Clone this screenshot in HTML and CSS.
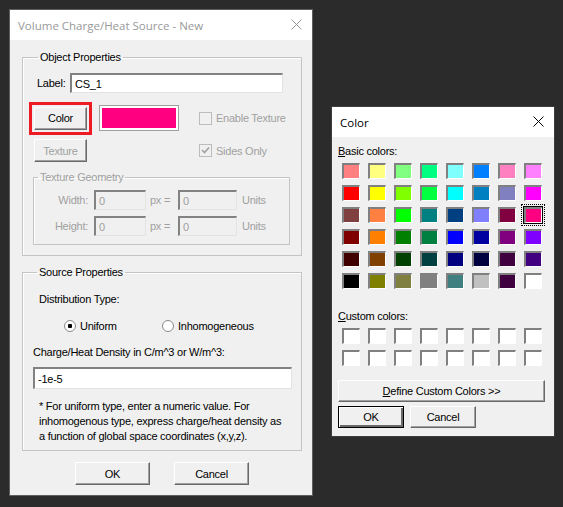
FILE: index.html
```html
<!DOCTYPE html>
<html lang="en">
<head>
<meta charset="UTF-8">
<title>Volume Charge/Heat Source - New</title>
<link rel="stylesheet" href="styles.css">
</head>
<body>
<div class="screen">

    <!-- main dialog -->
    <div class="dialog dialog-source">
        <div class="titlebar inactive">
            <span class="title">Volume Charge/Heat Source - New</span>
            <svg class="close" width="11" height="11" viewBox="0 0 11 11"><path d="M0.5 0.5 L10.5 10.5 M10.5 0.5 L0.5 10.5" stroke="currentColor" stroke-width="1" fill="none"/></svg>
        </div>
        <div class="dialog-body">
            <fieldset class="group group-object">
                <legend>Object Properties</legend>
                <div class="label-row">
                    <span class="label-text">Label:</span>
                    <div class="field field-label">CS_1</div>
                </div>
                <div class="row row-color">
                    <div class="btn btn-color">Color</div>
                    <div class="color-preview"><div class="color-fill"></div></div>
                    <div class="check disabled"><span class="box"></span>Enable Texture</div>
                </div>
                <div class="row row-texture">
                    <div class="btn disabled">Texture</div>
                    <div class="check disabled checked">
                        <span class="box"><svg width="9" height="9" viewBox="0 0 9 9"><path d="M1 4 L3.5 6.5 L8 1.5" stroke="currentColor" stroke-width="1.6" fill="none"/></svg></span>Sides Only
                    </div>
                </div>
                <fieldset class="group group-geom disabled">
                    <legend>Texture Geometry</legend>
                    <div class="geom-row">
                        <span class="geom-label">Width:</span>
                        <div class="field field-px">0</div>
                        <span class="geom-eq">px =</span>
                        <div class="field field-units">0</div>
                        <span class="geom-units">Units</span>
                    </div>
                    <div class="geom-row">
                        <span class="geom-label">Height:</span>
                        <div class="field field-px">0</div>
                        <span class="geom-eq">px =</span>
                        <div class="field field-units">0</div>
                        <span class="geom-units">Units</span>
                    </div>
                </fieldset>
            </fieldset>

            <fieldset class="group group-source">
                <legend>Source Properties</legend>
                <div class="dist-label">Distribution Type:</div>
                <div class="radio-row">
                    <div class="radio selected"><span class="dot"></span>Uniform</div>
                    <div class="radio"><span class="dot"></span>Inhomogeneous</div>
                </div>
                <div class="density-label">Charge/Heat Density in C/m^3 or W/m^3:</div>
                <div class="field field-density">-1e-5</div>
                <p class="note">* For uniform type, enter a numeric value. For<br>inhomogenous type, express charge/heat density as<br>a function of global space coordinates (x,y,z).</p>
            </fieldset>

            <div class="actions">
                <div class="btn btn-wide">OK</div>
                <div class="btn btn-wide">Cancel</div>
            </div>
        </div>
    </div>

    <!-- color picker -->
    <div class="dialog dialog-color">
        <div class="titlebar">
            <span class="title">Color</span>
            <svg class="close" width="11" height="11" viewBox="0 0 11 11"><path d="M0.5 0.5 L10.5 10.5 M10.5 0.5 L0.5 10.5" stroke="currentColor" stroke-width="1" fill="none"/></svg>
        </div>
        <div class="color-body">
            <div class="section-label"><u>B</u>asic colors:</div>
            <div class="swatch-grid">
                <span class="swatch" style="background:#ff8080"></span>
                <span class="swatch" style="background:#ffff80"></span>
                <span class="swatch" style="background:#80ff80"></span>
                <span class="swatch" style="background:#00ff80"></span>
                <span class="swatch" style="background:#80ffff"></span>
                <span class="swatch" style="background:#0080ff"></span>
                <span class="swatch" style="background:#ff80c0"></span>
                <span class="swatch" style="background:#ff80ff"></span>

                <span class="swatch" style="background:#ff0000"></span>
                <span class="swatch" style="background:#ffff00"></span>
                <span class="swatch" style="background:#80ff00"></span>
                <span class="swatch" style="background:#00ff40"></span>
                <span class="swatch" style="background:#00ffff"></span>
                <span class="swatch" style="background:#0080c0"></span>
                <span class="swatch" style="background:#8080c0"></span>
                <span class="swatch" style="background:#ff00ff"></span>

                <span class="swatch" style="background:#804040"></span>
                <span class="swatch" style="background:#ff8040"></span>
                <span class="swatch" style="background:#00ff00"></span>
                <span class="swatch" style="background:#008080"></span>
                <span class="swatch" style="background:#004080"></span>
                <span class="swatch" style="background:#8080ff"></span>
                <span class="swatch" style="background:#800040"></span>
                <span class="swatch selected" style="background:#ff0080"></span>

                <span class="swatch" style="background:#800000"></span>
                <span class="swatch" style="background:#ff8000"></span>
                <span class="swatch" style="background:#008000"></span>
                <span class="swatch" style="background:#008040"></span>
                <span class="swatch" style="background:#0000ff"></span>
                <span class="swatch" style="background:#0000a0"></span>
                <span class="swatch" style="background:#800080"></span>
                <span class="swatch" style="background:#8000ff"></span>

                <span class="swatch" style="background:#400000"></span>
                <span class="swatch" style="background:#804000"></span>
                <span class="swatch" style="background:#004000"></span>
                <span class="swatch" style="background:#004040"></span>
                <span class="swatch" style="background:#000080"></span>
                <span class="swatch" style="background:#000040"></span>
                <span class="swatch" style="background:#400040"></span>
                <span class="swatch" style="background:#400080"></span>

                <span class="swatch" style="background:#000000"></span>
                <span class="swatch" style="background:#808000"></span>
                <span class="swatch" style="background:#808040"></span>
                <span class="swatch" style="background:#808080"></span>
                <span class="swatch" style="background:#408080"></span>
                <span class="swatch" style="background:#c0c0c0"></span>
                <span class="swatch" style="background:#400040"></span>
                <span class="swatch" style="background:#ffffff"></span>
            </div>

            <div class="section-label section-custom"><u>C</u>ustom colors:</div>
            <div class="swatch-grid">
                <span class="swatch"></span><span class="swatch"></span><span class="swatch"></span><span class="swatch"></span>
                <span class="swatch"></span><span class="swatch"></span><span class="swatch"></span><span class="swatch"></span>
                <span class="swatch"></span><span class="swatch"></span><span class="swatch"></span><span class="swatch"></span>
                <span class="swatch"></span><span class="swatch"></span><span class="swatch"></span><span class="swatch"></span>
            </div>

            <div class="btn btn-define"><u>D</u>efine Custom Colors &gt;&gt;</div>
            <div class="color-actions">
                <div class="btn btn-small default">OK</div>
                <div class="btn btn-small">Cancel</div>
            </div>
        </div>
    </div>

</div>
</body>
</html>
```

FILE: styles.css
```css
* {
    box-sizing: border-box;
}

body {
    margin: 0;
    width: 563px;
    height: 507px;
    overflow: hidden;
    background-color: #2b2b2b;
    font-family: "Liberation Sans", Arial, sans-serif;
    font-size: 11px;
    letter-spacing: -0.25px;
    color: #000;
}

.screen {
    display: flex;
    align-items: flex-start;
    padding: 10px 0 0 10px;
}

/* window frame */
.dialog {
    background-color: #f0f0f0;
    box-shadow: 0 0 0 1px #5e5e5e;
}

.dialog-source {
    width: 302px;
    height: 485px;
}

.dialog-color {
    width: 222px;
    height: 329px;
    margin-left: 20px;
    margin-top: 97px;
    box-shadow: 0 0 0 1px #3c3c3c;
}

.titlebar {
    height: 30px;
    display: flex;
    align-items: center;
    justify-content: space-between;
    padding: 0 10px 0 8px;
    background-color: #fff;
    color: #000;
}

.titlebar .title {
    font-family: "Open Sans", "Noto Sans", sans-serif;
    font-size: 11.5px;
    letter-spacing: 0;
    padding-top: 1px;
}

.titlebar.inactive {
    color: #999;
}

.close {
    margin-top: -1px;
}

/* group boxes */
.dialog-body {
    padding: 11px 10px 0 12px;
}

.group {
    margin: 0;
    border: 1px solid #c4c4c4;
    box-shadow: inset 1px 1px 0 #fff;
    min-width: 0;
}

.group legend {
    padding: 0 2px;
    margin-left: 4px;
    line-height: 13px;
}

.group-object {
    padding: 9px 0 10px 11px;
}

.label-row {
    display: flex;
    align-items: center;
    margin-left: 3px;
}

.label-text {
    width: 33px;
}

.field {
    height: 20px;
    display: flex;
    align-items: center;
    padding-left: 3px;
    background-color: #fff;
    border-style: solid;
    border-width: 2px 1px 1px 2px;
    border-color: #828282 #e3e3e3 #e3e3e3 #828282;
}

.field-label {
    width: 213px;
}

.row {
    display: flex;
    align-items: center;
}

.row-color {
    margin-top: 12px;
    height: 26px;
}

.row-texture {
    margin-top: 8px;
    height: 23px;
}

/* push buttons */
.btn {
    display: flex;
    align-items: center;
    justify-content: center;
    height: 23px;
    background-color: #f0f0f0;
    border: 1px solid;
    border-color: #fff #696969 #696969 #fff;
    box-shadow: inset -1px -1px 0 #a0a0a0;
}

.row .btn {
    width: 53px;
}

.btn.disabled {
    color: #a0a0a0;
}

.btn-color {
    outline: 3px solid #ed1c24;
    outline-offset: 2px;
}

.color-preview {
    width: 80px;
    height: 26px;
    margin-left: 12px;
    padding: 2px;
    border: 1px solid #a0a0a0;
    background-color: #fff;
}

.color-fill {
    height: 100%;
    background-color: #ff0080;
}

.check {
    display: flex;
    align-items: center;
    margin-left: 20px;
}

.row-texture .check {
    margin-left: 112px;
}

.check .box {
    width: 13px;
    height: 13px;
    margin-right: 4px;
    display: flex;
    align-items: center;
    justify-content: center;
    border: 1px solid #bcbcbc;
    background-color: #f0f0f0;
}

.disabled,
.check.disabled {
    color: #a0a0a0;
}

/* texture geometry */
.group-geom {
    margin: 9px 0 0 -1px;
    width: 257px;
    padding: 6px 0 8px 0;
}

.geom-row {
    display: flex;
    align-items: center;
}

.geom-row + .geom-row {
    margin-top: 6px;
}

.geom-label {
    width: 54px;
    text-align: right;
    margin-right: 6px;
}

.group-geom .field {
    background-color: #f0f0f0;
    color: #a0a0a0;
}

.field-px {
    width: 52px;
}

.field-units {
    width: 59px;
}

.geom-eq {
    width: 32px;
    padding-left: 4px;
}

.geom-units {
    margin-left: 5px;
}

/* source properties */
.group-source {
    margin-top: 10px;
    padding: 14px 9px 6px 10px;
}

.dist-label {
    margin-left: 6px;
    line-height: 13px;
}

.radio-row {
    display: flex;
    align-items: center;
    margin-top: 13px;
    margin-left: 31px;
    height: 13px;
}

.radio {
    display: flex;
    align-items: center;
    width: 98px;
}

.radio .dot {
    width: 12px;
    height: 12px;
    margin-right: 4px;
    border-radius: 50%;
    border: 1px solid #8a8a8a;
    background-color: #fff;
}

.radio.selected .dot {
    background: radial-gradient(circle, #000 2px, #fff 2.5px);
}

.density-label {
    margin-top: 14px;
    line-height: 13px;
}

.field-density {
    width: 259px;
    height: 22px;
    margin-top: 8px;
}

.note {
    margin: 10px 0 0 6px;
    line-height: 15px;
    white-space: nowrap;
}

.actions {
    display: flex;
    justify-content: center;
    gap: 24px;
    margin-top: 11px;
}

.btn-wide {
    width: 75px;
    height: 23px;
}

/* color dialog */
.color-body {
    padding: 8px 0 0 6px;
}

.section-label {
    line-height: 13px;
}

.swatch-grid {
    display: grid;
    grid-template-columns: repeat(8, 18px);
    column-gap: 8px;
    row-gap: 6px;
    margin: 5px 0 0 4px;
}

.swatch {
    width: 18px;
    height: 16px;
    background-color: #fff;
    border-style: solid;
    border-width: 2px 1px 1px 2px;
    border-color: #808080 #fff #fff #808080;
}

.swatch.selected {
    box-shadow: 0 0 0 1px #000;
    outline: 1px dotted #000;
    outline-offset: 2px;
}

.section-custom {
    margin-top: 21px;
}

.btn-define {
    width: 207px;
    height: 22px;
    margin-top: 14px;
}

.color-actions {
    display: flex;
    gap: 6px;
    margin-top: 4px;
}

.btn-small {
    width: 66px;
    height: 22px;
}

.btn.default {
    border-color: #000;
    box-shadow: inset 1px 1px 0 #fff, inset -2px -2px 0 #696969;
}
```
